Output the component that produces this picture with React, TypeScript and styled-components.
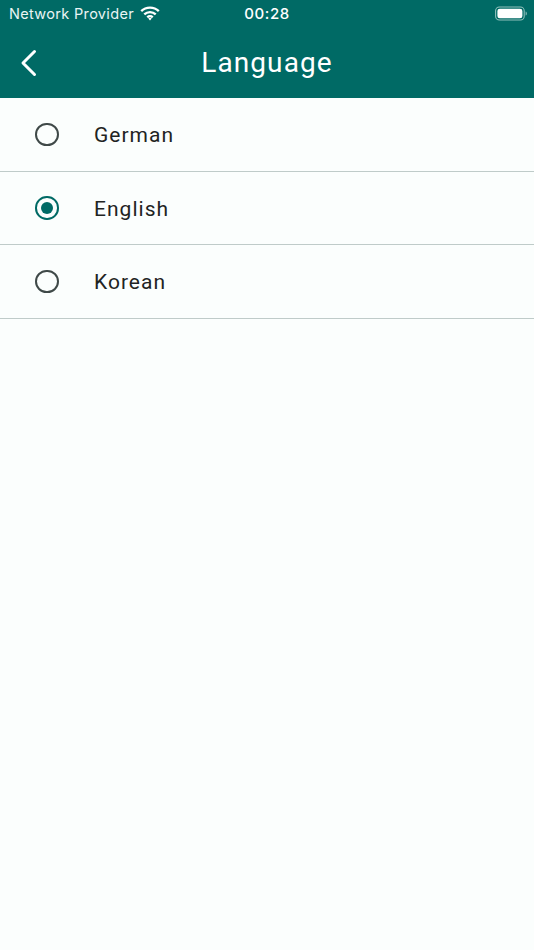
import React from "react";
import styled, { createGlobalStyle } from "styled-components";

const Global = createGlobalStyle`
  html, body { margin: 0; padding: 0; background: #fbfefd; }
  * { box-sizing: border-box; }
  body { font-family: Roboto, "Liberation Sans", sans-serif; }
`;
const Page = styled.div`
  width: 534px;
  height: 950px;
  background: #fbfefd;
  overflow: hidden;
`;
const Header = styled.header`
  height: 98px;
  background: #006a65;
  color: #fff;
  display: flex;
  flex-direction: column;
`;
const StatusBar = styled.div`
  height: 27px;
  padding: 0 7px 0 9px;
  display: grid;
  grid-template-columns: 1fr auto 1fr;
  align-items: center;
  font-family: Inter, "Liberation Sans", sans-serif;
`;
const Carrier = styled.div`
  display: flex;
  align-items: center;
  gap: 6px;
  font-size: 14.5px;
  letter-spacing: 0.33px;
  color: #eaf5f4;
`;
const Clock = styled.div`
  font-size: 15px;
  font-weight: 500;
  letter-spacing: 0.55px;
  margin-left: -2px;
`;
const BatteryWrap = styled.div`
  justify-self: end;
  display: flex;
`;
const NavBar = styled.div`
  flex: 1;
  display: grid;
  grid-template-columns: 60px 1fr 60px;
  align-items: center;
`;
const Back = styled.div`
  padding-left: 20px;
  display: flex;
`;
const Title = styled.h1`
  margin: 0;
  font-size: 28px;
  font-weight: 400;
  letter-spacing: 1.1px;
  text-align: center;
`;
const Row = styled.div`
  height: 73.6px;
  display: flex;
  align-items: center;
  padding-left: 35px;
  border-bottom: 1px solid #bfcbc9;
`;
const Radio = styled.span<{ $on?: boolean }>`
  width: 23.5px;
  height: 23.5px;
  border-radius: 50%;
  border: 2.75px solid ${(p) => (p.$on ? "#006a65" : "#3f4948")};
  display: flex;
  align-items: center;
  justify-content: center;
  &::after {
    content: "";
    display: ${(p) => (p.$on ? "block" : "none")};
    width: 12px;
    height: 12px;
    border-radius: 50%;
    background: #006a65;
  }
`;
const Label = styled.span`
  margin-left: 35.5px;
  padding-top: 2px;
  font-size: 21px;
  letter-spacing: 1.02px;
  color: #1f2423;
`;

const Wifi = () => (
  <svg width="20" height="15" viewBox="0 0 20 15" fill="none" stroke="#fff" strokeWidth="2.4">
    <path d="M1.2 5.2a12.6 12.6 0 0 1 17.6 0" />
    <path d="M4.3 8.4a8.2 8.2 0 0 1 11.4 0" />
    <path d="M7.3 11.3a3.9 3.9 0 0 1 5.4 0" />
    <path d="M10 14.6l-1.7-2a2.6 2.6 0 0 1 3.4 0z" fill="#fff" stroke="none" />
  </svg>
);
const Battery = () => (
  <svg width="32" height="15" viewBox="0 0 32 15">
    <rect x="0.6" y="1" width="28.6" height="13" rx="3.8" fill="none" stroke="#8fc0bc" strokeWidth="1.1" />
    <rect x="2.4" y="2.7" width="25" height="9.6" rx="2.4" fill="#fff" />
    <path d="M30.6 5.4c.9.3 1.2 1.1 1.2 2.1s-.3 1.8-1.2 2.1z" fill="#8fc0bc" />
  </svg>
);
const Chevron = () => (
  <svg width="18" height="28" viewBox="0 0 18 28" fill="none" stroke="#fff" strokeWidth="3" strokeLinecap="round" strokeLinejoin="round">
    <path d="M14.5 2.5 3 14l11.5 11.5" />
  </svg>
);

const languages = [
  { name: "German", selected: false },
  { name: "English", selected: true },
  { name: "Korean", selected: false },
];

export default function App() {
  return (
    <Page>
      <Global />
      <Header>
        <StatusBar>
          <Carrier>Network Provider <Wifi /></Carrier>
          <Clock>00:28</Clock>
          <BatteryWrap><Battery /></BatteryWrap>
        </StatusBar>
        <NavBar>
          <Back><Chevron /></Back>
          <Title>Language</Title>
        </NavBar>
      </Header>
      {languages.map((l) => (
        <Row key={l.name}>
          <Radio $on={l.selected} />
          <Label>{l.name}</Label>
        </Row>
      ))}
    </Page>
  );
}
